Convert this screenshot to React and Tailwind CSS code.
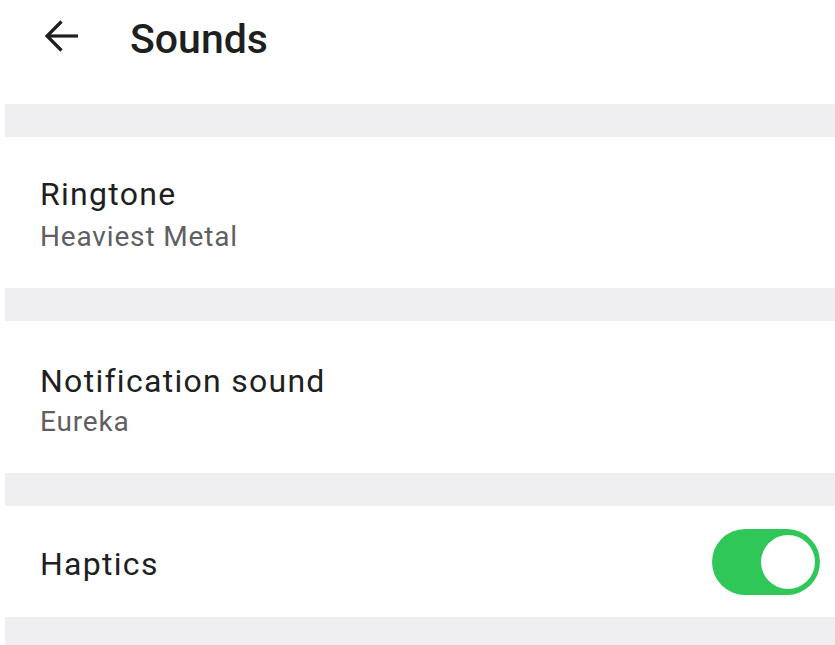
import React from 'react'

const font = { fontFamily: 'Roboto, "Noto Sans", sans-serif' }

function Gap({ h }) {
  return <div className={`ml-[5px] bg-[#efeff1] ${h}`} />
}

function Toggle() {
  return (
    <div className="w-[108px] h-[66px] rounded-full bg-[#2fc858] flex items-center justify-end pr-[5px]">
      <div className="w-[54px] h-[54px] rounded-full bg-white" />
    </div>
  )
}

export default function App() {
  return (
    <div className="w-[835px] h-[645px] bg-white overflow-hidden" style={font}>
      {/* Header */}
      <div className="h-[104px] flex items-start">
        <svg className="ml-[45px] mt-[19px]" width="34" height="34" viewBox="0 0 34 34" fill="none"
          stroke="#1f1f1f" strokeWidth="3.2" strokeLinecap="butt" strokeLinejoin="miter">
          <path d="M2 17H33" />
          <path d="M16.5 2.5L2 17l14.5 14.5" />
        </svg>
        <h1 className="ml-[51px] mt-[13px] text-[41px] leading-[52px] font-medium text-[#1f1f1f]">Sounds</h1>
      </div>

      <Gap h="h-[33px]" />

      {/* Ringtone */}
      <div className="h-[151px] pl-[40px] pt-[37px]">
        <p className="text-[32px] leading-[40px] tracking-[0.04em] text-[#1f1f1f]">Ringtone</p>
        <p className="mt-[5px] text-[28px] leading-[36px] tracking-[0.03em] text-[#5f5f62]">Heaviest Metal</p>
      </div>

      <Gap h="h-[33px]" />

      {/* Notification sound */}
      <div className="h-[152px] pl-[40px] pt-[40px]">
        <p className="text-[32px] leading-[40px] tracking-[0.04em] text-[#1f1f1f]">Notification sound</p>
        <p className="mt-[3px] text-[28px] leading-[36px] tracking-[0.03em] text-[#5f5f62]">Eureka</p>
      </div>

      <Gap h="h-[33px]" />

      {/* Haptics */}
      <div className="h-[111px] pl-[40px] pr-[15px] flex items-center justify-between">
        <p className="pt-[5px] text-[32px] leading-[40px] tracking-[0.04em] text-[#1f1f1f]">Haptics</p>
        <Toggle />
      </div>

      <Gap h="h-[28px]" />
    </div>
  )
}
